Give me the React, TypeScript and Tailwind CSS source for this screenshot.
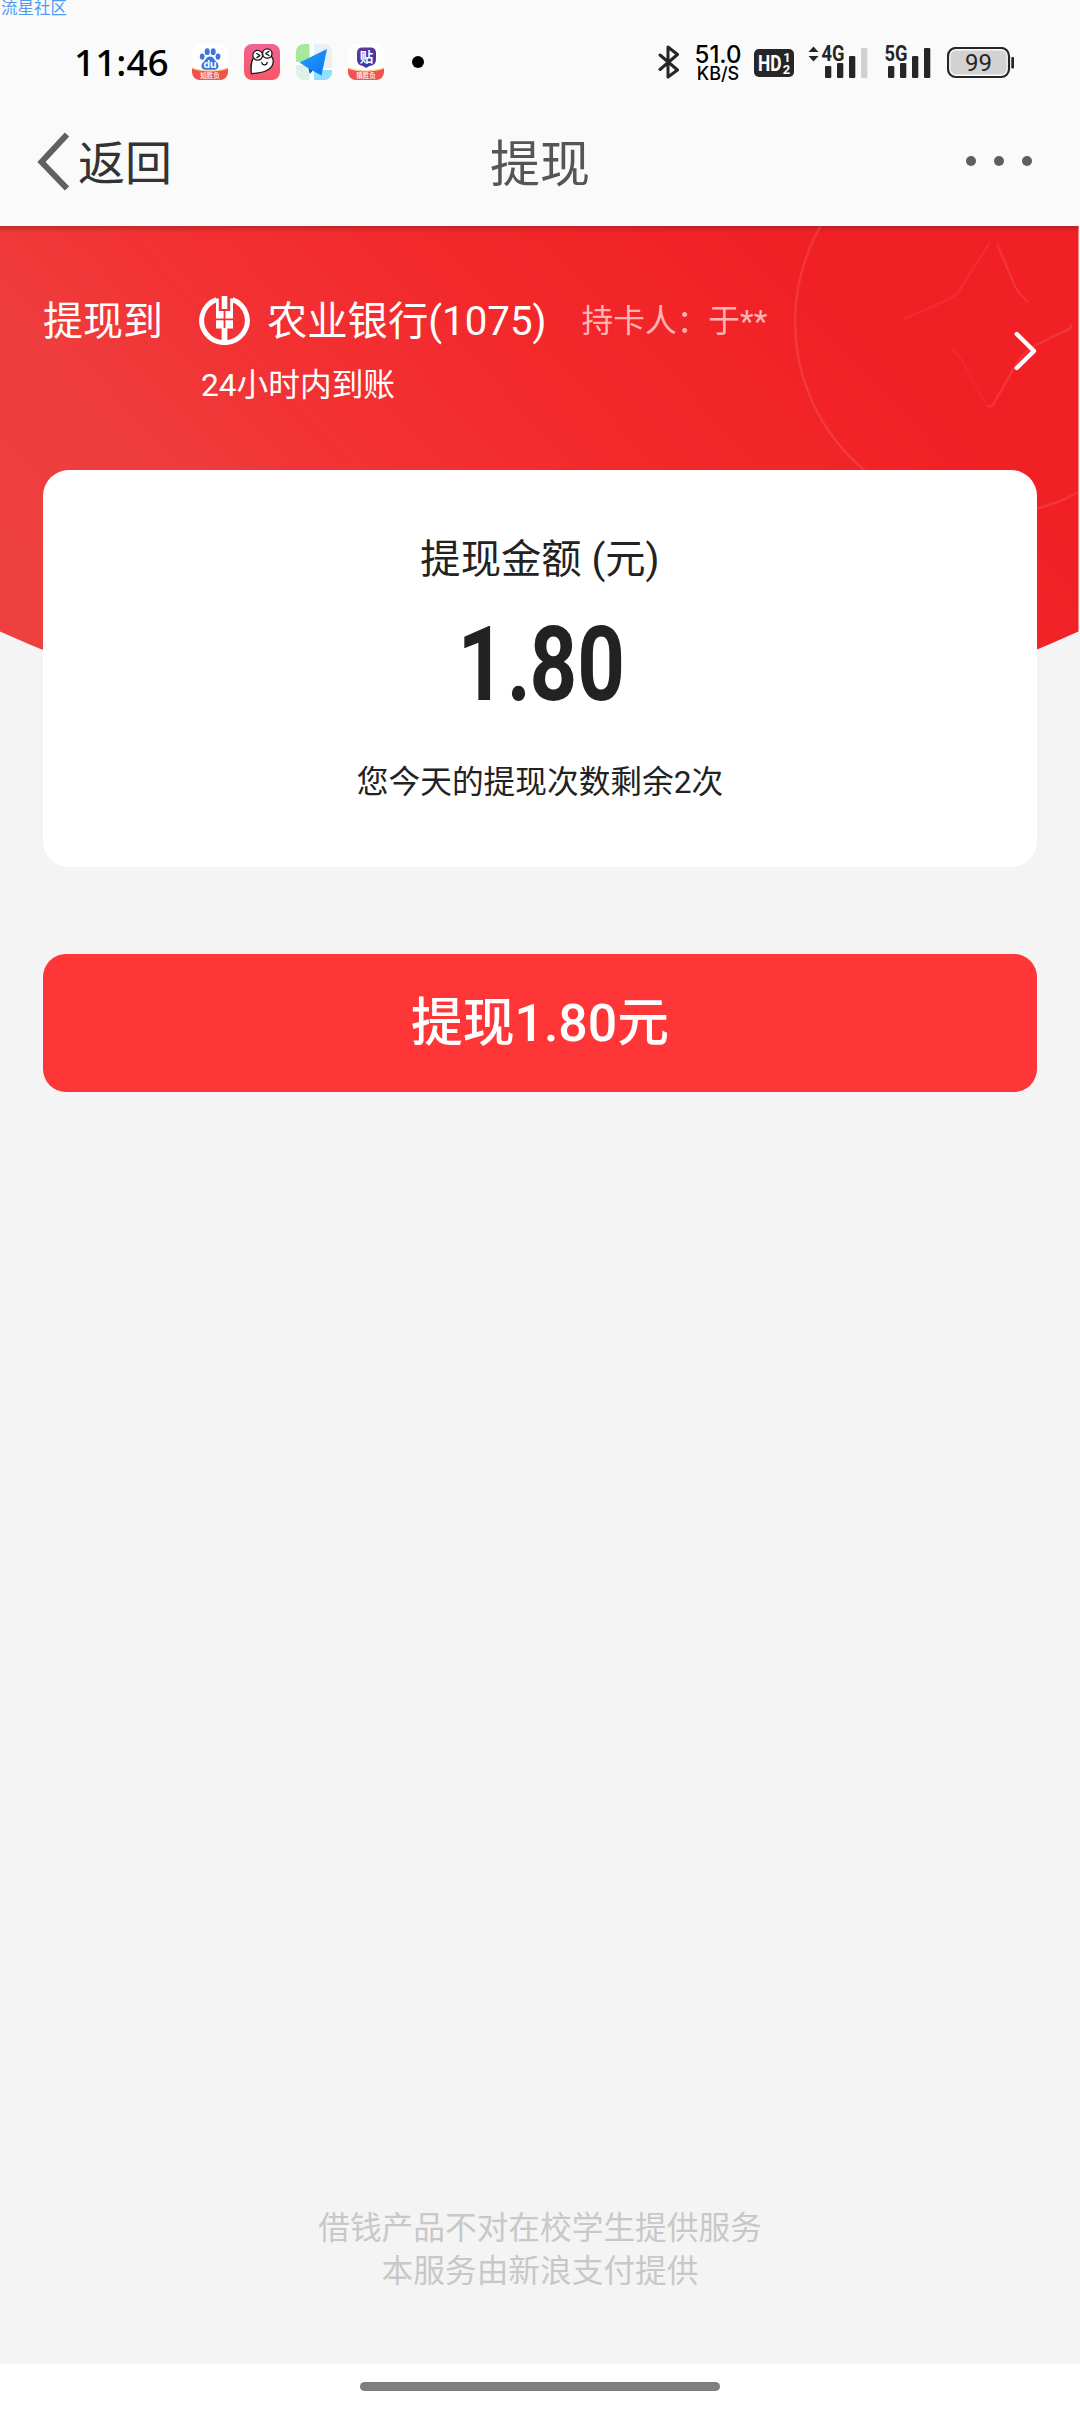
import React from 'react';

const BluetoothIcon: React.FC = () => (
  <svg width="22" height="36" viewBox="0 0 22 36" fill="none" stroke="#262626" strokeWidth="3" strokeLinejoin="round" strokeLinecap="round">
    <path d="M2 11 L19.5 26 L10 33 V3 L19.5 10.5 L2 25.5" />
  </svg>
);

const HdIcon: React.FC = () => (
  <svg width="40" height="28" viewBox="0 0 40 28">
    <rect width="40" height="28" rx="5" fill="#262626" />
    <g fill="#fff" fontFamily="Roboto, sans-serif" fontWeight="700">
      <text x="4" y="22" fontSize="22" textLength="23.5" lengthAdjust="spacingAndGlyphs">HD</text>
      <text x="29.2" y="12.8" fontSize="13">1</text>
      <text x="28.8" y="25" fontSize="13">2</text>
    </g>
  </svg>
);

interface SignalProps {
  label: string;
  arrows?: boolean;
  level: number;
}

const bars = [
  { x: 3, y: 21 },
  { x: 15, y: 18 },
  { x: 27, y: 11 },
  { x: 39, y: 3 },
];

const SignalIcon: React.FC<SignalProps> = ({ label, arrows, level }) => (
  <div className="flex items-start">
    {arrows && (
      <svg width="14" height="34" viewBox="0 0 14 34" fill="#262626">
        <path d="M5.5 1.5 L10.5 7 H0.5 Z M5.5 16.5 L0.5 11 H10.5 Z" />
      </svg>
    )}
    <svg className="overflow-visible" width="46" height="34" viewBox="0 0 46 34">
      <text x="-0.5" y="16.3" fontSize="21.5" fontWeight="700" fontFamily="Roboto, sans-serif" fill="#262626" textLength="23" lengthAdjust="spacingAndGlyphs">
        {label}
      </text>
      {bars.map((bar, index) => (
        <rect key={bar.x} x={bar.x} y={bar.y} width="6.3" height={33 - bar.y} rx="1.2" fill={index < level ? '#262626' : '#d0d0d0'} />
      ))}
    </svg>
  </div>
);

const BatteryIcon: React.FC = () => (
  <svg width="68" height="32" viewBox="0 0 68 32">
    <rect x="1" y="1" width="61" height="29" rx="8" fill="#fafafa" stroke="#262626" strokeWidth="2.2" />
    <rect x="3.5" y="3.5" width="56" height="24" rx="5.5" fill="#d2d2d2" />
    <rect x="64.3" y="10" width="2.7" height="11.5" rx="1" fill="#262626" />
    <text x="31.5" y="24" fontSize="24" textAnchor="middle" fontFamily="Roboto, sans-serif" fill="#262626">99</text>
  </svg>
);

const BaiduIcon: React.FC = () => (
  <svg width="36" height="36" viewBox="0 0 36 36">
    <clipPath id="baidu"><rect width="36" height="36" rx="8" /></clipPath>
    <g clipPath="url(#baidu)">
      <rect width="36" height="36" fill="#fff" />
      <g fill="#3a74dc">
        <ellipse cx="10.2" cy="12.6" rx="2.4" ry="3.1" />
        <ellipse cx="15.2" cy="7.7" rx="2.5" ry="3.4" />
        <ellipse cx="21.2" cy="7.7" rx="2.5" ry="3.4" />
        <ellipse cx="26" cy="12.6" rx="2.4" ry="3.1" />
        <path d="M18 12.5 C21.5 12.5 22.5 16 24.5 18 C27.5 20.5 27.5 25.5 22.5 25.7 H13.5 C8.5 25.5 8.5 20.5 11.5 18 C13.5 16 14.5 12.5 18 12.5 Z" />
      </g>
      <path d="M0 23.3 C8 27.3 28 27.3 36 23.3 V36 H0 Z" fill="#fbd58f" />
      <path d="M0 24.6 C8 28.6 28 28.6 36 24.6 V36 H0 Z" fill="#f0524f" />
      <text x="18" y="23.8" fontSize="10.5" fontWeight="700" textAnchor="middle" fontFamily="Inter, sans-serif" fill="#fff">du</text>
      <text x="18" y="34.3" fontSize="6.5" fontWeight="500" textAnchor="middle" fontFamily="'Noto Sans CJK SC', sans-serif" fill="#fff">知胜负</text>
    </g>
  </svg>
);

const GhostIcon: React.FC = () => (
  <svg width="36" height="36" viewBox="0 0 36 36">
    <defs>
      <linearGradient id="ghost" x1="0" y1="0" x2="0" y2="1">
        <stop offset="0" stopColor="#ef6496" />
        <stop offset="1" stopColor="#fb5565" />
      </linearGradient>
    </defs>
    <rect width="36" height="36" rx="8" fill="url(#ghost)" />
    <g fill="#fff" stroke="#191919" strokeWidth="1.3" strokeLinejoin="round" strokeLinecap="round">
      <path d="M10 13.5 C6.5 17 6.8 23 7.3 29.8 C13 28.6 18 29.3 23 26.3 C30 22.5 30.5 16 27.5 12.5 C22 10 14 10.5 10 13.5 Z" />
      <circle cx="13.7" cy="11.3" r="4.9" />
      <circle cx="23.3" cy="9.5" r="4.7" />
      <path d="M12.8 9.4 L15.8 11.6 L12.9 13.6 M25 7.3 L21.8 9.6 L25 11.5 M17.8 18.6 C18.5 21.8 22.8 21.4 23.2 18.3" fill="none" />
    </g>
  </svg>
);

const PlaneIcon: React.FC = () => (
  <svg width="36" height="36" viewBox="0 0 36 36">
    <defs>
      <linearGradient id="plane" x1="0" y1="0" x2="1" y2="1">
        <stop offset="0" stopColor="#28a0fc" />
        <stop offset="1" stopColor="#0a76f5" />
      </linearGradient>
    </defs>
    <clipPath id="map"><rect width="36" height="36" rx="8" /></clipPath>
    <g clipPath="url(#map)">
      <rect width="36" height="36" fill="#fff" />
      <path d="M0 0 H13.5 V18 H0 Z" fill="#a5ea9c" />
      <path d="M18 0 H36 V24 H18 Z" fill="#e9f0f5" />
      <path d="M0 21 H13.5 V36 H0 Z" fill="#ddf2e6" />
      <path d="M18 26 H36 V36 H18 Z" fill="#8fe0fb" />
    </g>
    <path d="M31 5 L3.5 18.5 L12.5 24.5 L25.5 31.5 Z" fill="url(#plane)" />
    <path d="M12.5 24.5 L13.8 30 L16.8 26.5 Z" fill="#0957c3" />
  </svg>
);

const TiebaIcon: React.FC = () => (
  <svg width="36" height="36" viewBox="0 0 36 36">
    <defs>
      <linearGradient id="tieba" x1="0" y1="0" x2="1" y2="1">
        <stop offset="0" stopColor="#6a3795" />
        <stop offset="1" stopColor="#2b37b5" />
      </linearGradient>
    </defs>
    <clipPath id="tiebaClip"><rect width="36" height="36" rx="8" /></clipPath>
    <g clipPath="url(#tiebaClip)">
      <rect width="36" height="36" fill="#fff" />
      <path d="M0 23.3 C8 27.3 28 27.3 36 23.3 V36 H0 Z" fill="#fbd58f" />
      <path d="M0 24.6 C8 28.6 28 28.6 36 24.6 V36 H0 Z" fill="#f0524f" />
      <path d="M14 3.5 H22.5 Q28 3.5 28 9 V15.5 Q28 21 21.5 22 L18 24 L15 22 Q9 21 9 15.5 V9 Q9 3.5 14 3.5 Z" fill="url(#tieba)" />
      <text x="18.5" y="18" fontSize="13.5" fontWeight="700" textAnchor="middle" fontFamily="'Noto Sans CJK SC', sans-serif" fill="#fff">贴</text>
      <text x="18" y="34.3" fontSize="6.5" fontWeight="500" textAnchor="middle" fontFamily="'Noto Sans CJK SC', sans-serif" fill="#fff">猜胜负</text>
    </g>
  </svg>
);

const StatusBar: React.FC = () => (
  <div className="flex h-[96px] items-center pt-[28px]">
    <span className="ml-[74px] w-[118px] font-['Noto_Sans'] text-[37px] leading-[36px] font-medium text-black">11:46</span>
    <div className="flex items-center gap-4">
      <BaiduIcon />
      <GhostIcon />
      <PlaneIcon />
      <TiebaIcon />
    </div>
    <span className="ml-[28px] size-3 rounded-full bg-black" />
    <div className="ml-[234px] flex items-center">
      <BluetoothIcon />
      <div className="ml-[15px] flex w-[46px] flex-col items-center pt-[3px] font-['Inter'] font-medium text-black">
        <span className="text-[24px] leading-[20px]">51.0</span>
        <span className="text-[18px] leading-[18px]">KB/S</span>
      </div>
      <div className="ml-[13px] pt-[1px]"><HdIcon /></div>
      <div className="ml-[14px]"><SignalIcon label="4G" arrows level={3} /></div>
      <div className="ml-[17px]"><SignalIcon label="5G" level={4} /></div>
      <div className="ml-[16px] pt-[1px]"><BatteryIcon /></div>
    </div>
  </div>
);

const NavBar: React.FC = () => (
  <div className="grid h-[130px] grid-cols-3 items-center">
    <button className="flex items-center pl-[36px]">
      <svg width="36" height="60" viewBox="0 0 36 60" fill="none" stroke="#606060" strokeWidth="6">
        <path d="M31 3.5 L5.5 31 L31 57.5" />
      </svg>
      <span className="ml-[6px] pt-[6px] text-[47px] leading-[60px] text-[#333]">返回</span>
    </button>
    <h1 className="pt-[7px] text-center text-[50px] leading-[60px] text-[#555]">提现</h1>
    <div className="flex justify-end gap-[18px] pr-[48px]">
      <span className="size-[10px] rounded-full bg-[#5e5e5e]" />
      <span className="size-[10px] rounded-full bg-[#5e5e5e]" />
      <span className="size-[10px] rounded-full bg-[#5e5e5e]" />
    </div>
  </div>
);

const BankLogo: React.FC = () => (
  <svg width="51" height="49" viewBox="0 0 51 49">
    <path d="M17.5 3.6 A22.8 22.2 0 1 0 33.5 3.6" fill="none" stroke="#fff" strokeWidth="5" />
    <path d="M22.7 0 H28.3 V13 H22.7 Z" fill="#fff" />
    <path d="M17 2.5 H19.8 V15 H24.6 V22.5 H17 Z M34 2.5 H31.2 V15 H26.4 V22.5 H34 Z" fill="#fff" />
    <path d="M17 24.3 H24.6 V32.5 H17 Z M26.4 24.3 H34 V32.5 H26.4 Z" fill="#fff" />
    <path d="M22.6 32 H28.4 V46 H22.6 Z" fill="#fff" />
  </svg>
);

const HeroBackground: React.FC = () => (
  <svg className="col-start-1 row-start-1" width="1080" height="520" viewBox="0 226 1080 520">
    <defs>
      <linearGradient id="hero" gradientUnits="userSpaceOnUse" x1="80" y1="600" x2="640" y2="60">
        <stop offset="0" stopColor="#ee3f3f" />
        <stop offset="0.2" stopColor="#ef3c3c" />
        <stop offset="0.38" stopColor="#f23234" />
        <stop offset="0.65" stopColor="#f3282b" />
        <stop offset="1" stopColor="#f02025" />
      </linearGradient>
      <linearGradient id="heroShade" x1="0" y1="0" x2="0" y2="1">
        <stop offset="0" stopColor="#7a2020" stopOpacity="0.45" />
        <stop offset="1" stopColor="#a02020" stopOpacity="0" />
      </linearGradient>
    </defs>
    <clipPath id="heroClip">
      <path d="M0 226 H1078.5 V631.5 Q830 745 540 745 Q250 745 0 631.5 Z" />
    </clipPath>
    <g clipPath="url(#heroClip)">
      <rect y="226" width="1080" height="520" fill="url(#hero)" />
      <rect y="226" width="1080" height="7" fill="url(#heroShade)" />
      <g fill="none" stroke="#fff" strokeWidth="2.4">
        <circle cx="988" cy="322" r="193" strokeOpacity="0.1" />
        <path d="M997 244 L1014 284 Q1019 295 1028 302" strokeOpacity="0.09" />
        <path d="M1070 324 L1071 328 L1036 345 Q1025 351 1017 363 L994 403 Q991 409 987 405" strokeOpacity="0.1" />
        <path d="M985 403 L965 366 Q960 355 952 349" strokeOpacity="0.04" />
        <path d="M904 319 L949 299 Q956 296 961 288 L990 242" strokeOpacity="0.06" />
      </g>
    </g>
  </svg>
);

const BankRow: React.FC = () => (
  <div className="flex h-[244px] items-start pr-[43px] pl-[43px] text-white">
    <span className="mt-[71px] text-[40px] leading-[50px]">提现到</span>
    <div className="ml-[36px] grow pt-[69px]">
      <div className="flex h-[50px] items-center">
        <BankLogo />
        <span className="ml-[17px] pt-[4px] text-[40.3px] leading-[50px]">农业银行(1075)</span>
        <span className="ml-[35px] pt-[4px] text-[31.7px] leading-[50px] text-[#ffb4b4]">持卡人：于**</span>
      </div>
      <p className="mt-[21px] ml-[2px] text-[31.7px] leading-[40px]">24小时内到账</p>
    </div>
    <svg className="mt-[105px]" width="23" height="40" viewBox="0 0 23 40" fill="none" stroke="#fff" strokeWidth="4.4" strokeLinecap="round" strokeLinejoin="round">
      <path d="M2.8 3 L20 20 L2.8 37" />
    </svg>
  </div>
);

const App: React.FC = () => {
  return (
    <div className="flex h-[2412px] w-[1080px] flex-col overflow-hidden bg-[#f4f4f4] font-['Roboto','Noto_Sans_CJK_SC',sans-serif]">
      {/* Header */}
      <header className="relative bg-[#fafafa]">
        <span className="absolute top-0 left-[1px] text-[16.5px] leading-[18px] text-[#4b9cf2]">流星社区</span>
        <StatusBar />
        <NavBar />
      </header>

      {/* Withdraw form */}
      <main className="grid">
        <HeroBackground />
        <div className="col-start-1 row-start-1">
          <BankRow />
          <section className="mx-[43px] flex h-[397px] flex-col items-center rounded-[26px] bg-white text-[#222]">
            <h2 className="mt-[63px] text-[40.3px] leading-[54px]">提现金额 (元)</h2>
            <p className="mt-[28px] flex scale-x-[0.8] pl-[4px] text-[104px] leading-[100px] font-bold">
              <span>1</span>
              <span className="mr-[-2px] ml-[2px]">.</span>
              <span>80</span>
            </p>
            <p className="mt-[47px] text-[31.7px] leading-[42px]">您今天的提现次数剩余2次</p>
          </section>
          <div className="mx-[43px] mt-[87px]">
            <button className="h-[138px] w-full rounded-[23px] bg-[#ff3638] pt-[2px] text-[51.8px] leading-[60px] font-medium text-white">
              提现1.80元
            </button>
          </div>
        </div>
      </main>

      {/* Footer */}
      <footer className="mt-auto">
        <div className="mb-[71px] text-center text-[31.7px] leading-[43px] text-[#c8c8c8]">
          <p>借钱产品不对在校学生提供服务</p>
          <p>本服务由新浪支付提供</p>
        </div>
        <div className="flex h-[48px] justify-center bg-white pt-[18px]">
          <span className="h-[9px] w-[360px] rounded-full bg-[#7f7f7f]" />
        </div>
      </footer>
    </div>
  );
};

export default App;
